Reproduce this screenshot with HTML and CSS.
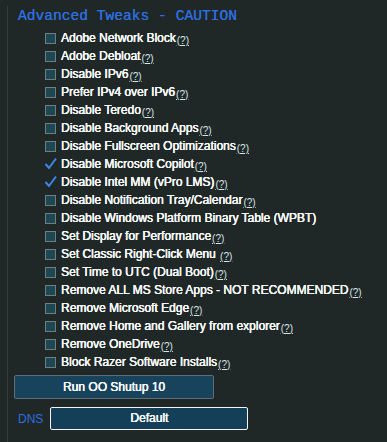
FILE: index.html
```html
<!DOCTYPE html>
<html lang="en">
<head>
  <meta charset="UTF-8" />
  <title>Advanced Tweaks</title>
  <link rel="stylesheet" href="styles.css">
</head>
<body>

<div class="panel">
  <h2 class="title">Advanced Tweaks - CAUTION</h2>

  <ul class="tweaks">
    <li><span class="box"></span>Adobe Network Block<a class="help">(?)</a></li>
    <li><span class="box"></span>Adobe Debloat<a class="help">(?)</a></li>
    <li><span class="box"></span>Disable IPv6<a class="help">(?)</a></li>
    <li><span class="box"></span>Prefer IPv4 over IPv6<a class="help">(?)</a></li>
    <li><span class="box"></span>Disable Teredo<a class="help">(?)</a></li>
    <li><span class="box"></span>Disable Background Apps<a class="help">(?)</a></li>
    <li><span class="box"></span>Disable Fullscreen Optimizations<a class="help">(?)</a></li>
    <li><span class="box checked"><svg viewBox="0 0 13 13" width="13" height="13"><path d="M1.5 7 L5 11 L12 1.5" fill="none" stroke="#3d86e8" stroke-width="2"/></svg></span>Disable Microsoft Copilot<a class="help">(?)</a></li>
    <li><span class="box checked"><svg viewBox="0 0 13 13" width="13" height="13"><path d="M1.5 7 L5 11 L12 1.5" fill="none" stroke="#3d86e8" stroke-width="2"/></svg></span>Disable Intel MM (vPro LMS)<a class="help">(?)</a></li>
    <li><span class="box"></span>Disable Notification Tray/Calendar<a class="help">(?)</a></li>
    <li><span class="box"></span>Disable Windows Platform Binary Table (WPBT)</li>
    <li><span class="box"></span>Set Display for Performance<a class="help">(?)</a></li>
    <li><span class="box"></span>Set Classic Right-Click Menu&nbsp;<a class="help">(?)</a></li>
    <li><span class="box"></span>Set Time to UTC (Dual Boot)<a class="help">(?)</a></li>
    <li><span class="box"></span>Remove ALL MS Store Apps - NOT RECOMMENDED<a class="help">(?)</a></li>
    <li><span class="box"></span>Remove Microsoft Edge<a class="help">(?)</a></li>
    <li><span class="box"></span>Remove Home and Gallery from explorer<a class="help">(?)</a></li>
    <li><span class="box"></span>Remove OneDrive<a class="help">(?)</a></li>
    <li><span class="box"></span>Block Razer Software Installs<a class="help">(?)</a></li>
  </ul>

  <button class="run">Run OO Shutup 10</button>

  <div class="dns">
    <span class="dns-label">DNS</span>
    <div class="combo">Default</div>
  </div>
</div>

</body>
</html>
```

FILE: styles.css
```css
  body {
    margin: 0;
    background: #1f2827;
    font-family: "Liberation Sans", Arial, sans-serif;
    color: #f4f6f6;
  }

  .panel {
    margin-left: 7px;
    height: 437px;
    box-sizing: border-box;
    border-left: 1px solid #323c3b;
    border-bottom: 1px solid #323c3b;
  }

  .title {
    margin: 6px 0 0 10px;
    font-family: "Liberation Mono", "DejaVu Sans Mono", monospace;
    font-size: 14.6px;
    font-weight: normal;
    line-height: 20px;
    color: #2d6fe2;
    height: 20px;
    text-shadow: 0 0 0.3px #2d6fe2;
  }

  .tweaks {
    list-style: none;
    margin: 3px 0 0 0;
    padding: 0 0 0 37px;
  }

  .tweaks li {
    display: flex;
    align-items: center;
    height: 18px;
    font-size: 12px;
    white-space: nowrap;
    text-shadow: 0.3px 0 0 #fff, 0 0 0.5px #fff;
  }

  .box {
    width: 9px;
    height: 9px;
    border: 1px solid #6f7f80;
    background: #1d4752;
    margin-right: 5px;
    flex: 0 0 auto;
  }

  .box.checked {
    border-color: transparent;
    background: none;
    position: relative;
  }

  .box.checked svg {
    position: absolute;
    left: -2px;
    top: -3px;
  }

  .help {
    font-size: 10px;
    text-decoration: underline;
    color: #d6e4ea;
    position: relative;
    top: 2px;
    margin-left: 1px;
    text-shadow: none;
  }

  .run {
    display: block;
    margin: 4px 0 0 6px;
    width: 200px;
    height: 24px;
    background: #17435c;
    border: 1px solid #5d6f74;
    border-radius: 2px;
    color: #f4f6f6;
    font-family: "Liberation Sans", Arial, sans-serif;
    font-size: 12px;
    text-shadow: 0.3px 0 0 #fff, 0 0 0.5px #fff;
  }

  .dns {
    display: flex;
    align-items: center;
    margin-top: 8px;
    padding-left: 10px;
    gap: 7px;
  }

  .dns-label {
    color: #2d6fe2;
    font-size: 12px;
  }

  .combo {
    width: 196px;
    height: 21px;
    line-height: 21px;
    text-align: center;
    background: #133f58;
    border: 1px solid #f4f6f6;
    border-radius: 2px;
    font-size: 12px;
    text-shadow: 0.3px 0 0 #fff, 0 0 0.5px #fff;
  }
```
